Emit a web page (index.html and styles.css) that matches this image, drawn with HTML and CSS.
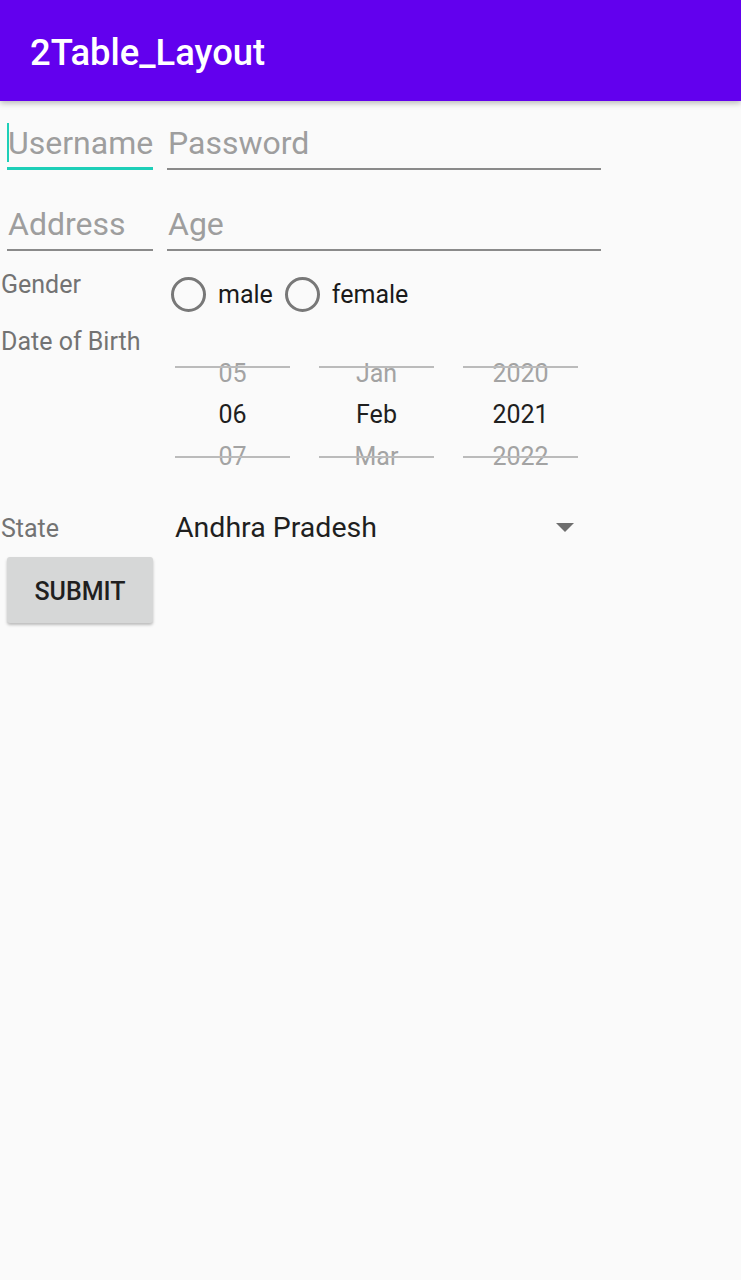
FILE: index.html
```html
<!DOCTYPE html>
<html>
<head>
<meta charset="utf-8">
<link rel="stylesheet" href="styles.css">
</head>
<body>
<header class="appbar"><h1 class="title">2Table_Layout</h1></header>
<main class="form">
  <div class="row row-fields first">
    <div class="cell-a"><div class="field focused"><span class="cursor"></span><span class="hint">Username</span></div></div>
    <div class="cell-b"><div class="field"><span class="hint">Password</span></div></div>
  </div>
  <div class="row row-fields second">
    <div class="cell-a"><div class="field"><span class="hint">Address</span></div></div>
    <div class="cell-b"><div class="field"><span class="hint">Age</span></div></div>
  </div>
  <div class="row row-gender">
    <div class="cell-a"><span class="label">Gender</span></div>
    <div class="cell-b radios">
      <label class="radio"><span class="circle"></span><span class="rtext">male</span></label>
      <label class="radio"><span class="circle"></span><span class="rtext">female</span></label>
    </div>
  </div>
  <div class="row row-dob">
    <div class="cell-a"><span class="label">Date of Birth</span></div>
    <div class="cell-b picker">
      <div class="wheel"><span class="dim">05</span><span class="sel">06</span><span class="dim">07</span></div>
      <div class="wheel"><span class="dim">Jan</span><span class="sel">Feb</span><span class="dim">Mar</span></div>
      <div class="wheel"><span class="dim">2020</span><span class="sel">2021</span><span class="dim">2022</span></div>
    </div>
  </div>
  <div class="row row-state">
    <div class="cell-a"><span class="label">State</span></div>
    <div class="cell-b spinner"><span class="stext">Andhra Pradesh</span><span class="arrow"></span></div>
  </div>
  <div class="row row-btn">
    <div class="cell-a"><button class="btn">SUBMIT</button></div>
  </div>
</main>
</body>
</html>
```
FILE: styles.css
```css
* { box-sizing: border-box; }
html, body { margin: 0; padding: 0; }
body {
  width: 741px;
  height: 1280px;
  background: #fafafa;
  font-family: Roboto, "Liberation Sans", sans-serif;
  overflow: hidden;
}
.appbar {
  height: 101px;
  background: #6200ee;
  display: flex;
  align-items: center;
  padding-left: 30px;
  box-shadow: 0 2px 6px rgba(0,0,0,0.28);
  position: relative;
  z-index: 1;
}
.title {
  margin: 0;
  color: #fff;
  font-size: 36.4px;
  font-weight: 500;
  line-height: 40px;
  padding-top: 5px;
}
.form { width: 608px; }
.row { display: flex; }
.cell-a { width: 160px; flex: none; }
.cell-b { width: 448px; flex: none; }

.row-fields.first { margin-top: 22px; }
.row-fields.second { margin-top: 34px; }
.field {
  position: relative;
  margin: 0 7px;
  padding: 0 0 5px 1px;
  border-bottom: 2px solid #8a8a8a;
  font-size: 32px;
  line-height: 40px;
  height: 47px;
  white-space: nowrap;
  overflow: hidden;
}
.field.focused { border-bottom: 3px solid #1ecfb8; padding-bottom: 4px; }
.hint { color: #9e9e9e; }
.cursor {
  position: absolute;
  left: 0;
  top: -3px;
  width: 2px;
  height: 42px;
  background: #1ecfb8;
}

.label {
  display: block;
  color: #737373;
  font-size: 25px;
  line-height: 30px;
  padding-left: 1px;
}
.row-gender { margin-top: 19px; height: 48px; }
.radios { display: flex; align-items: center; padding-left: 11px; gap: 12px; }
.radio { display: flex; align-items: center; gap: 12px; }
.circle {
  width: 35px; height: 35px;
  border: 3.5px solid #787878;
  border-radius: 50%;
}
.rtext { font-size: 25px; line-height: 30px; color: #1a1a1a; padding-top: 2px; }

.row-dob .label { padding-top: 9px; }
.picker { display: flex; gap: 29px; padding-left: 15px; margin-top: 35px; }
.wheel {
  position: relative;
  width: 115px;
  display: flex;
  flex-direction: column;
}
.wheel span {
  height: 41.5px;
  line-height: 41.5px;
  text-align: center;
  font-size: 25px;
}
.wheel .sel { line-height: 39.5px; }
.wheel .dim { color: #a3a3a3; }
.wheel .sel { color: #1f1f1f; }
.wheel::before, .wheel::after {
  content: "";
  position: absolute;
  left: 0; right: 0;
  height: 2px;
  background: #bbbbbb;
}
.wheel::before { top: 13px; }
.wheel::after { top: 103px; }

.row-state { margin-top: 33px; align-items: baseline; }
.spinner { display: flex; align-items: center; padding-left: 15px; padding-right: 34px; justify-content: space-between; }
.stext { font-size: 28.5px; line-height: 34px; color: #1f1f1f; }
.arrow {
  width: 0; height: 0;
  border-left: 9px solid transparent;
  border-right: 9px solid transparent;
  border-top: 9px solid #6e6e6e;
}

.row-btn { margin-top: 12px; }
.btn {
  margin-left: 7px;
  width: 146px;
  height: 66px;
  border: none;
  border-radius: 3px;
  background: #d6d7d7;
  box-shadow: 0 2px 3px rgba(0,0,0,0.25);
  font-family: Roboto, "Liberation Sans", sans-serif;
  font-size: 25px;
  font-weight: 500;
  color: #1f1f1f;
  padding: 3px 0 0 0;
}
```
